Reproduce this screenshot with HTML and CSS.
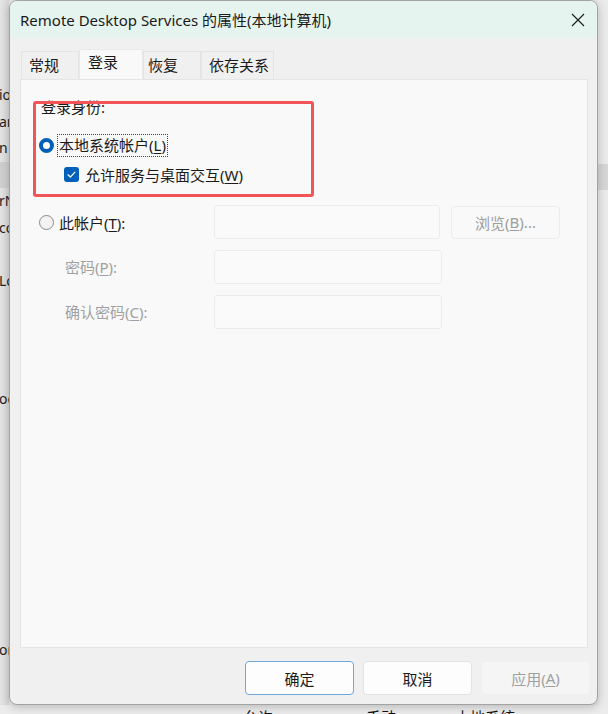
FILE: index.html
```html
<!DOCTYPE html>
<html lang="zh-CN">
<head>
<meta charset="utf-8">
<title>Remote Desktop Services 的属性(本地计算机)</title>
<link rel="stylesheet" href="styles.css">
</head>
<body>
<div class="screen">
  <div class="top">
    <div class="bg-left">
      <div class="bg-row"><span>io</span></div>
      <div class="bg-row"><span>ar</span></div>
      <div class="bg-row"><span>n</span></div>
      <div class="bg-row hl"></div>
      <div class="bg-row"><span>rN</span></div>
      <div class="bg-row"><span>co</span></div>
      <div class="bg-row"></div>
      <div class="bg-row"><span>Lo</span></div>
      <div class="bg-gap1"></div>
      <div class="bg-row"><span>oc</span></div>
      <div class="bg-gap2"></div>
      <div class="bg-row"><span>or</span></div>
    </div>

    <div class="dialog">
      <div class="titlebar">
        <span class="title">Remote Desktop Services 的属性(本地计算机)</span>
        <svg class="close" width="14" height="14" viewBox="0 0 14 14"><path d="M1 1 L13 13 M13 1 L1 13" stroke="#1a1a1a" stroke-width="1.1" fill="none"/></svg>
      </div>

      <div class="body">
        <div class="tabs">
          <div class="tab t1">常规</div>
          <div class="tab t2 active">登录</div>
          <div class="tab t3">恢复</div>
          <div class="tab t4">依存关系</div>
        </div>

        <div class="panel">
          <div class="annot"></div>
          <div class="group-label">登录身份:</div>
          <div class="row radio-row">
            <span class="radio checked"></span>
            <span class="focus">本地系统帐户(<u>L</u>)</span>
          </div>
          <div class="row check-row">
            <span class="checkbox"><svg width="15" height="15" viewBox="0 0 15 15"><path d="M4 7.8 L6.4 10 L11 5.2" stroke="#fff" stroke-width="1.2" fill="none" stroke-linecap="round" stroke-linejoin="round"/></svg></span>
            <span>允许服务与桌面交互(<u>W</u>)</span>
          </div>

          <div class="form">
            <div class="flabel acct"><span class="radio"></span><span>此帐户(<u>T</u>):</span></div>
            <div class="input"></div>
            <div class="btn browse">浏览(<u>B</u>)...</div>

            <div class="flabel sub dis">密码(<u>P</u>):</div>
            <div class="input wide"></div>
            <div></div>

            <div class="flabel sub dis">确认密码(<u>C</u>):</div>
            <div class="input wide"></div>
            <div></div>
          </div>
        </div>

        <div class="buttons">
          <div class="btn ok">确定</div>
          <div class="btn">取消</div>
          <div class="btn disabled">应用(<u>A</u>)</div>
        </div>
      </div>
    </div>

    <div class="bg-right">
      <div class="rhl"></div>
    </div>
  </div>
  <div class="bottom">
    <span class="c1">允许...</span>
    <span class="c2">手动</span>
    <span class="c3">本地系统</span>
  </div>
</div>
</body>
</html>
```
FILE: styles.css
```css
* { box-sizing: border-box; }
html, body { margin: 0; padding: 0; }
body {
  width: 608px;
  height: 714px;
  overflow: hidden;
  background: #e9e9e9;
  font-family: "Segoe UI", "Noto Sans", "Noto Sans CJK SC", sans-serif;
  font-size: 15px;
  color: #1b1b1b;
}
.screen { display: flex; flex-direction: column; height: 714px; }
.top { display: flex; height: 705px; flex: none; }

/* background window bits */
.bg-left {
  width: 9px;
  flex: none;
  overflow: hidden;
  background: linear-gradient(to right, #e4e4e4, #d9d9d9);
  padding-top: 82px;
}
.bg-row {
  height: 26.5px;
  line-height: 26.5px;
  white-space: nowrap;
  font-family: "Noto Sans", sans-serif;
  font-size: 14px;
  color: #222;
  text-indent: -1px;
}
.bg-row.hl { background: #cfcfcf; }
.bg-gap1 { height: 92px; }
.bg-gap2 { height: 224px; }

.bg-right {
  flex: 1;
  background: #ebebeb;
  padding-top: 164px;
}
.rhl { height: 26px; background: #d6d6d6; }

.bottom {
  height: 9px;
  overflow: hidden;
  background: #ececec;
  display: flex;
  padding-left: 243px;
  font-size: 15px;
  line-height: 20px;
  color: #111;
}
.bottom span { display: block; margin-top: 2px; }
.bottom .c1 { width: 123px; }
.bottom .c2 { width: 89px; }

/* dialog */
.dialog {
  width: 589px;
  flex: none;
  height: 705px;
  background: #f0f0f0;
  border: 1px solid #a3a3a3;
  border-radius: 8px;
  box-shadow: 0 2px 10px rgba(0,0,0,0.22);
  display: flex;
  flex-direction: column;
  overflow: hidden;
  position: relative;
  z-index: 1;
}
.titlebar {
  height: 37px;
  flex: none;
  background: #e6f4f0;
  display: flex;
  align-items: center;
  justify-content: space-between;
  padding: 0 12px 0 10px;
}
.title { font-size: 15px; line-height: 20px; color: #1a1a1a; }
.close { display: block; }

.body {
  flex: 1;
  display: flex;
  flex-direction: column;
  padding: 11px 9px 0 10px;
}
.tabs {
  display: flex;
  height: 30px;
  align-items: flex-end;
  flex: none;
  padding-left: 1px;
}
.tab {
  height: 28px;
  line-height: 26px;
  padding-left: 7px;
  background: #f0f0f0;
  border: 1px solid #e4e4e4;
  border-bottom: none;
  font-size: 15px;
  color: #1a1a1a;
}
.tab.t1 { width: 58px; }
.tab.t2 { width: 64px; padding-left: 8px; }
.tab.t3 { width: 58px; padding-left: 4px; }
.tab.t4 { width: 73px; padding-left: 7px; }
.tab.active {
  height: 30px;
  line-height: 24px;
  background: #f9f9f9;
  border-color: #e9e9e9;
  position: relative;
  z-index: 2;
}

.panel {
  height: 569px;
  flex: none;
  background: #f9f9f9;
  border: 1px solid #e5e5e5;
  position: relative;
  padding: 17px 0 0 17px;
}
.annot {
  position: absolute;
  left: 12px;
  top: 21px;
  width: 281px;
  height: 96px;
  border: 3.5px solid #f25457;
  border-radius: 3px;
  z-index: 3;
}
.group-label {
  height: 20px;
  line-height: 20px;
  padding-left: 3px;
  color: #1a1a1a;
}
.row { display: flex; align-items: center; }
.radio-row { margin-top: 17px; height: 23px; }
.radio {
  width: 15px;
  height: 15px;
  border-radius: 50%;
  border: 1px solid #8b8b8b;
  background: #f3f3f3;
  flex: none;
  margin-left: 1px;
}
.radio.checked {
  border: 4.5px solid #005fb8;
  background: #fff;
}
.focus {
  margin-left: 3px;
  border: 1px dotted #444;
  line-height: 21px;
  padding: 0 1px 0 1px;
}
.check-row { margin-top: 10px; height: 15px; padding-left: 26px; }
.checkbox {
  width: 15px;
  height: 15px;
  border-radius: 3px;
  background: #005fb8;
  flex: none;
  margin-right: 6px;
}
.checkbox svg { display: block; }

.form {
  margin-top: 23px;
  display: grid;
  grid-template-columns: 166px 227px 109px;
  grid-template-rows: 34px 34px 34px;
  row-gap: 11px;
  column-gap: 10px;
  align-items: center;
}
.flabel { display: flex; align-items: center; line-height: 20px; white-space: nowrap; }
.flabel.acct .radio { margin-right: 5px; }
.flabel.acct { margin-top: 1px; }
.flabel.sub { padding-left: 27px; }
.dis { color: #a0a0a0; }
.input {
  height: 34px;
  width: 226px;
  background: #fafafa;
  border: 1px solid #ececec;
  border-radius: 3px;
}
.input.wide { width: 228px; }

.btn {
  height: 34px;
  width: 109px;
  border-radius: 4px;
  display: flex;
  align-items: center;
  justify-content: center;
  font-size: 15px;
  background: #fdfdfd;
  border: 1px solid #e3e3e3;
  color: #1a1a1a;
}
.btn.browse {
  height: 33px;
  background: #f9f9f9;
  border-color: #ececec;
  color: #9d9d9d;
}
.buttons {
  display: flex;
  justify-content: flex-end;
  gap: 9px;
  margin-top: 13px;
  margin-right: -2px;
}
.btn.ok { border: 1px solid #6fa6dc; background: #fdfdfd; }
.btn.disabled { background: #f5f5f5; border-color: #f0f0f0; color: #a0a0a0; }
u { text-decoration-thickness: 1px; text-underline-offset: 2px; }
```
